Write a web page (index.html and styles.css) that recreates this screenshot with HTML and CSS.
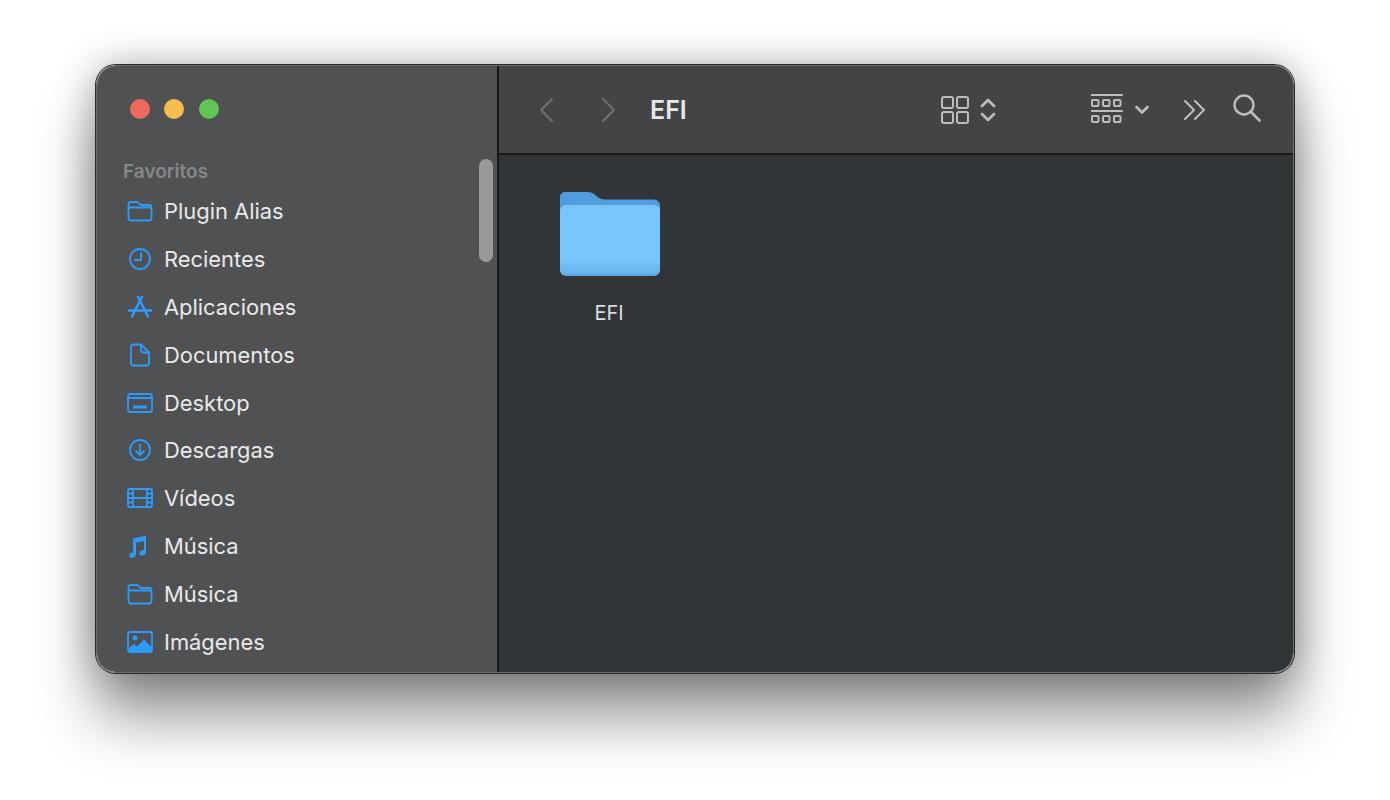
FILE: index.html
```html
<!DOCTYPE html>
<html>
<head>
    <title>EFI</title>
    <link rel="stylesheet" href="styles.css">
</head>
<body>
    <div class="window">
        <aside class="sidebar">
            <div class="traffic">
                <span class="dot red"></span>
                <span class="dot yellow"></span>
                <span class="dot green"></span>
            </div>
            <div class="side-title">Favoritos</div>
            <ul class="side-list">
                <li>
                    <svg class="side-icon" viewBox="0 0 26 22"><path d="M1.500 7.500V4a2 2 0 0 1 2-2h6c1 0 1.400.3 2 1l1 1.200c.4.500.8.800 1.600.8H22a2.500 2.500 0 0 1 2.500 2.500V18a2.500 2.500 0 0 1-2.500 2.500H4A2.500 2.500 0 0 1 1.500 18V7.500h23"/></svg>
                    <span>Plugin Alias</span>
                </li>
                <li>
                    <svg class="side-icon" viewBox="0 0 26 22"><circle cx="13" cy="11" r="10"/><path d="M14 5v7H8"/></svg>
                    <span>Recientes</span>
                </li>
                <li>
                    <svg class="side-icon" viewBox="0 0 26 24"><path class="thick" d="M11 2l9 17.500M15 2L6 19.500M2 15.500h22M6 19.500l-1 2M20 19.500l1 2"/></svg>
                    <span>Aplicaciones</span>
                </li>
                <li>
                    <svg class="side-icon" viewBox="0 0 26 24"><path d="M6 1.500h8L22 9.500V20a2.500 2.500 0 0 1-2.500 2.500h-13A2.500 2.500 0 0 1 4 20V4a2.500 2.500 0 0 1 2-2.500zM14 1.500V7a2.500 2.500 0 0 0 2.500 2.500H22"/></svg>
                    <span>Documentos</span>
                </li>
                <li>
                    <svg class="side-icon" viewBox="0 0 26 20"><rect x="1" y="1" width="24" height="18" rx="2.500"/><path d="M1 5h24"/><rect class="fill" x="6" y="12.500" width="14" height="3"/></svg>
                    <span>Desktop</span>
                </li>
                <li>
                    <svg class="side-icon" viewBox="0 0 26 22"><circle cx="13" cy="11" r="10"/><path d="M13 5.500v10M9 12l4 4 4-4"/></svg>
                    <span>Descargas</span>
                </li>
                <li>
                    <svg class="side-icon" viewBox="0 0 26 20"><rect x="1" y="1" width="24" height="18" rx="1.500"/><path d="M6 1v18M20 1v18M6 10h14M1 5.500h5M1 10h5M1 14.500h5M20 5.500h5M20 10h5M20 14.500h5"/></svg>
                    <span>Vídeos</span>
                </li>
                <li>
                    <svg class="side-icon" viewBox="0 0 26 24"><path class="fill" transform="translate(-3 0)" d="M9 4.500L22 1.500v16.500c0 2.200-1.800 3.600-4 3.600-1.600 0-2.800-.9-2.800-2.300 0-1.700 1.400-2.600 3-2.900l1.800-.4V7l-8 1.800v11.400c0 2.200-1.800 3.600-4 3.600-1.600 0-2.800-.9-2.800-2.300 0-1.700 1.400-2.600 3-2.900L9 18.200z"/></svg>
                    <span>Música</span>
                </li>
                <li>
                    <svg class="side-icon" viewBox="0 0 26 22"><path d="M1.500 7.500V4a2 2 0 0 1 2-2h6c1 0 1.400.3 2 1l1 1.200c.4.500.8.800 1.600.8H22a2.500 2.500 0 0 1 2.500 2.500V18a2.500 2.500 0 0 1-2.500 2.500H4A2.500 2.500 0 0 1 1.500 18V7.500h23"/></svg>
                    <span>Música</span>
                </li>
                <li>
                    <svg class="side-icon" viewBox="0 0 26 22"><rect x="1" y="1" width="24" height="20" rx="2.500"/><circle class="fill" cx="8" cy="7" r="2.500"/><path class="fill" d="M1 18l6-5 3 2.500 7-7 8 8V19a2 2 0 0 1-2 2H3a2 2 0 0 1-2-2z"/></svg>
                    <span>Imágenes</span>
                </li>
            </ul>
            <div class="scroll-thumb"></div>
        </aside>
        <main class="main">
            <header class="toolbar">
                <svg class="nav-icon" viewBox="0 0 16 26"><path d="M14 2L3 13l11 11"/></svg>
                <svg class="nav-icon next" viewBox="0 0 16 26"><path d="M2 2l11 11L2 24"/></svg>
                <h1 class="path-title">EFI</h1>
                <svg class="tool-icon grid-view" viewBox="0 0 42 28"><rect x="1" y="1" width="11" height="11" rx="2"/><rect x="16" y="1" width="11" height="11" rx="2"/><rect x="1" y="16" width="11" height="11" rx="2"/><rect x="16" y="16" width="11" height="11" rx="2"/></svg>
                <svg class="tool-icon updown" viewBox="0 0 16 26"><path class="bold" d="M2 9l6-6 6 6M2 17l6 6 6-6"/></svg>
                <svg class="tool-icon group-view" viewBox="0 0 32 30"><path d="M0 1h31M0 17h31"/><rect x="1" y="6" width="6.500" height="6" rx="1"/><rect x="12" y="6" width="6.500" height="6" rx="1"/><rect x="23" y="6" width="6.500" height="6" rx="1"/><rect x="1" y="22" width="6.500" height="6" rx="1"/><rect x="12" y="22" width="6.500" height="6" rx="1"/><rect x="23" y="22" width="6.500" height="6" rx="1"/></svg>
                <svg class="tool-icon chevron" viewBox="0 0 14 10"><path class="bold" d="M1.500 2l5.500 5.500L12.500 2"/></svg>
                <svg class="tool-icon more" viewBox="0 0 22 20"><path d="M1 1l9 9-9 9M11 1l9 9-9 9"/></svg>
                <svg class="tool-icon search" viewBox="0 0 28 28"><circle cx="11" cy="11" r="9.500"/><path class="bold" d="M17.500 17.500l9 9"/></svg>
            </header>
            <section class="files">
                <div class="file">
                    <svg class="folder" viewBox="0 0 102 86">
                        <defs>
                            <linearGradient id="folderFront" x1="0" y1="0" x2="0" y2="1">
                                <stop offset="0" stop-color="#79c5fc"/>
                                <stop offset="0.8" stop-color="#79c6fd"/>
                                <stop offset="0.83" stop-color="#71bdf5"/>
                                <stop offset="0.94" stop-color="#6bb7ef"/>
                                <stop offset="1" stop-color="#59a3de"/>
                            </linearGradient>
                        </defs>
                        <path fill="#4f9ddd" d="M1 6a5 5 0 0 1 5-5h22c4 0 6 1 9 3.500 3 2.500 5 4 9 4h49a6 6 0 0 1 6 6V78a6 6 0 0 1-6 6H7a6 6 0 0 1-6-6z"/>
                        <rect x="1" y="14" width="100" height="71" rx="6" fill="url(#folderFront)"/>
                    </svg>
                    <span class="file-name">EFI</span>
                </div>
            </section>
        </main>
    </div>
</body>
</html>
```

FILE: styles.css
```css
* {
    box-sizing: border-box;
}

html, body {
    height: 100%;
}

body {
    margin: 0;
    padding: 65px 96px 0 96px;
    background: #fff;
    font-family: Inter, "Noto Sans", sans-serif;
    overflow: hidden;
}

.window {
    display: flex;
    width: 1198px;
    height: 608px;
    border-radius: 20px;
    overflow: hidden;
    border: 1px solid #6b6c6e;
    box-shadow: 0 0 0 1px #2a2a2a, 0 44px 60px rgba(0, 0, 0, 0.42), 0 0 38px rgba(0, 0, 0, 0.3);
}

.sidebar {
    position: relative;
    width: 402px;
    flex: none;
    padding: 0 0 0 26px;
    background: #505153;
    border-right: 2px solid #151617;
}

.traffic {
    display: flex;
    gap: 14.250px;
    padding: 33px 0 0 7px;
    height: 95px;
}

.dot {
    width: 20px;
    height: 20px;
    border-radius: 50%;
}

.red { background: #ec6a5e; }
.yellow { background: #f4bf4f; }
.green { background: #61c554; }

.side-title {
    font-size: 19px;
    line-height: 22px;
    font-weight: 600;
    color: #87888a;
}

.side-list {
    list-style: none;
    margin: 4px 0 0;
    padding: 0 0 0 4px;
}

.side-list li {
    display: flex;
    align-items: center;
    gap: 11px;
    height: 47.900px;
    font-size: 21.900px;
    color: #e9e9ea;
}

.side-icon {
    width: 26px;
    height: 24px;
    flex: none;
    fill: none;
    stroke: #2d9bfd;
    stroke-width: 1.800;
    stroke-linecap: round;
    stroke-linejoin: round;
}

.side-icon .fill {
    fill: #2d9bfd;
    stroke: none;
}

.side-icon .thick {
    stroke-width: 2.600;
}

.scroll-thumb {
    position: absolute;
    top: 93px;
    right: 4px;
    width: 14px;
    height: 103px;
    border-radius: 7px;
    background: #98999a;
}

.main {
    flex: 1;
    display: flex;
    flex-direction: column;
    background: #323538;
}

.toolbar {
    display: flex;
    align-items: center;
    height: 89px;
    flex: none;
    padding: 0 32px 0 39px;
    background: #434445;
    border-bottom: 2px solid #17181a;
}

.nav-icon {
    width: 16px;
    height: 26px;
    flex: none;
    fill: none;
    stroke: #6d6e70;
    stroke-width: 2.200;
    stroke-linecap: round;
    stroke-linejoin: round;
}

.nav-icon.next {
    margin-left: 47px;
}

.path-title {
    margin: 0 auto 0 33px;
    font-size: 25px;
    font-weight: 600;
    color: #e8e8e9;
}

.tool-icon {
    flex: none;
    fill: none;
    stroke: #bcbdbe;
    stroke-width: 2;
    stroke-linecap: round;
    stroke-linejoin: round;
}

.tool-icon .bold {
    stroke-width: 2.600;
}

.grid-view {
    width: 42px;
    height: 28px;
}

.updown {
    width: 16px;
    height: 26px;
    margin-left: -3px;
}

.group-view {
    width: 32px;
    height: 30px;
    margin-left: 95px;
    margin-top: -2px;
}

.chevron {
    width: 14px;
    height: 10px;
    margin-left: 12px;
}

.more {
    width: 22px;
    height: 20px;
    margin-left: 35px;
}

.search {
    width: 28px;
    height: 28px;
    margin-left: 27px;
    margin-top: -3px;
    stroke-width: 2.400;
}

.files {
    flex: 1;
    padding: 36px 0 0 55px;
}

.file {
    display: flex;
    flex-direction: column;
    align-items: center;
    width: 112px;
}

.folder {
    width: 102px;
    height: 86px;
}

.file-name {
    margin-top: 24px;
    margin-left: -2px;
    font-size: 20px;
    color: #dcdcdd;
}
```
